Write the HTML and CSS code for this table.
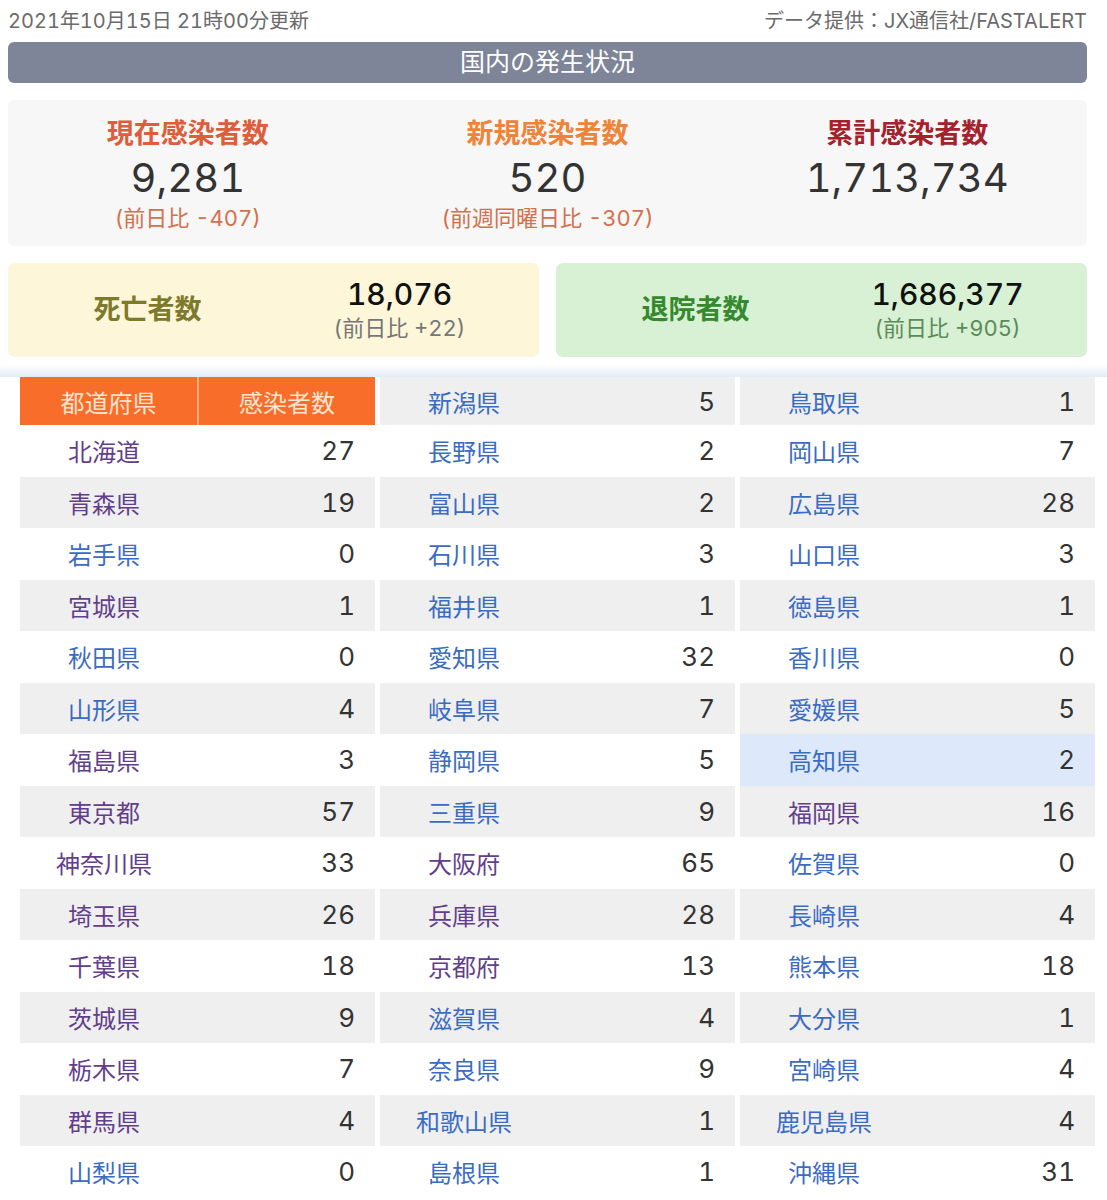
FILE: index.html
```html
<!DOCTYPE html>
<html lang="ja">
<head>
<meta charset="utf-8">
<title>国内の発生状況</title>
<link rel="stylesheet" href="styles.css">
</head>
<body>
<div class="page">
  <div class="meta">
    <span>2021年10月15日 21時00分更新</span>
    <span>データ提供：JX通信社/FASTALERT</span>
  </div>
  <h2 class="title">国内の発生状況</h2>
  <div class="summary">
    <div class="stat">
      <div class="stat-label current">現在感染者数</div>
      <div class="stat-num">9,281</div>
      <div class="stat-sub">(前日比 -407)</div>
    </div>
    <div class="stat">
      <div class="stat-label new">新規感染者数</div>
      <div class="stat-num">520</div>
      <div class="stat-sub">(前週同曜日比 -307)</div>
    </div>
    <div class="stat">
      <div class="stat-label total">累計感染者数</div>
      <div class="stat-num">1,713,734</div>
    </div>
  </div>
  <div class="boxes">
    <div class="box death">
      <div class="box-label">死亡者数</div>
      <div class="box-value">
        <div class="box-num">18,076</div>
        <div class="box-sub">(前日比 +22)</div>
      </div>
    </div>
    <div class="box recovered">
      <div class="box-label">退院者数</div>
      <div class="box-value">
        <div class="box-num">1,686,377</div>
        <div class="box-sub">(前日比 +905)</div>
      </div>
    </div>
  </div>
</div>
<div class="band"></div>
<div class="table">
  <div class="group">
    <div class="head"><div class="head-cell">都道府県</div><div class="head-cell split">感染者数</div></div>
    <div class="row"><span class="pref visited">北海道</span><span class="count">27</span></div>
    <div class="row alt"><span class="pref visited">青森県</span><span class="count">19</span></div>
    <div class="row"><span class="pref">岩手県</span><span class="count">0</span></div>
    <div class="row alt"><span class="pref visited">宮城県</span><span class="count">1</span></div>
    <div class="row"><span class="pref">秋田県</span><span class="count">0</span></div>
    <div class="row alt"><span class="pref">山形県</span><span class="count">4</span></div>
    <div class="row"><span class="pref visited">福島県</span><span class="count">3</span></div>
    <div class="row alt"><span class="pref visited">東京都</span><span class="count">57</span></div>
    <div class="row"><span class="pref visited">神奈川県</span><span class="count">33</span></div>
    <div class="row alt"><span class="pref visited">埼玉県</span><span class="count">26</span></div>
    <div class="row"><span class="pref visited">千葉県</span><span class="count">18</span></div>
    <div class="row alt"><span class="pref visited">茨城県</span><span class="count">9</span></div>
    <div class="row"><span class="pref visited">栃木県</span><span class="count">7</span></div>
    <div class="row alt"><span class="pref visited">群馬県</span><span class="count">4</span></div>
    <div class="row"><span class="pref">山梨県</span><span class="count">0</span></div>
  </div>
  <div class="group">
    <div class="row alt first"><span class="pref">新潟県</span><span class="count">5</span></div>
    <div class="row"><span class="pref">長野県</span><span class="count">2</span></div>
    <div class="row alt"><span class="pref">富山県</span><span class="count">2</span></div>
    <div class="row"><span class="pref">石川県</span><span class="count">3</span></div>
    <div class="row alt"><span class="pref">福井県</span><span class="count">1</span></div>
    <div class="row"><span class="pref">愛知県</span><span class="count">32</span></div>
    <div class="row alt"><span class="pref">岐阜県</span><span class="count">7</span></div>
    <div class="row"><span class="pref">静岡県</span><span class="count">5</span></div>
    <div class="row alt"><span class="pref">三重県</span><span class="count">9</span></div>
    <div class="row"><span class="pref visited">大阪府</span><span class="count">65</span></div>
    <div class="row alt"><span class="pref visited">兵庫県</span><span class="count">28</span></div>
    <div class="row"><span class="pref visited">京都府</span><span class="count">13</span></div>
    <div class="row alt"><span class="pref">滋賀県</span><span class="count">4</span></div>
    <div class="row"><span class="pref">奈良県</span><span class="count">9</span></div>
    <div class="row alt"><span class="pref">和歌山県</span><span class="count">1</span></div>
    <div class="row"><span class="pref">島根県</span><span class="count">1</span></div>
  </div>
  <div class="group">
    <div class="row alt first"><span class="pref">鳥取県</span><span class="count">1</span></div>
    <div class="row"><span class="pref">岡山県</span><span class="count">7</span></div>
    <div class="row alt"><span class="pref">広島県</span><span class="count">28</span></div>
    <div class="row"><span class="pref">山口県</span><span class="count">3</span></div>
    <div class="row alt"><span class="pref">徳島県</span><span class="count">1</span></div>
    <div class="row"><span class="pref">香川県</span><span class="count">0</span></div>
    <div class="row alt"><span class="pref">愛媛県</span><span class="count">5</span></div>
    <div class="row hover"><span class="pref">高知県</span><span class="count">2</span></div>
    <div class="row alt"><span class="pref visited">福岡県</span><span class="count">16</span></div>
    <div class="row"><span class="pref">佐賀県</span><span class="count">0</span></div>
    <div class="row alt"><span class="pref">長崎県</span><span class="count">4</span></div>
    <div class="row"><span class="pref">熊本県</span><span class="count">18</span></div>
    <div class="row alt"><span class="pref">大分県</span><span class="count">1</span></div>
    <div class="row"><span class="pref">宮崎県</span><span class="count">4</span></div>
    <div class="row alt"><span class="pref">鹿児島県</span><span class="count">4</span></div>
    <div class="row"><span class="pref">沖縄県</span><span class="count">31</span></div>
  </div>
</div>
</body>
</html>
```

FILE: styles.css
```css
* { box-sizing: border-box; }
html, body { margin: 0; padding: 0; background: #fff; }
body {
  font-family: Inter, "Noto Sans CJK JP", sans-serif;
  font-variant-numeric: tabular-nums;
  color: #333;
}
.page {
  margin: 0 20px 0 8px;
}
.meta {
  display: flex;
  justify-content: space-between;
  padding-top: 8px;
  height: 42px;
  font-size: 20px;
  line-height: 26px;
  color: #6b6b6b;
}
.title {
  margin: 0;
  height: 41px;
  line-height: 41px;
  background: #7e8598;
  border-radius: 6px;
  color: #fff;
  font-size: 25px;
  font-weight: 400;
  text-align: center;
}
.summary {
  margin-top: 17px;
  height: 146px;
  padding: 15px 0 13px;
  background: #f7f7f7;
  border-radius: 6px;
  display: grid;
  grid-template-columns: 1fr 1fr 1fr;
  text-align: center;
}
.stat-label {
  font-size: 27px;
  font-weight: 700;
  line-height: 38px;
}
.stat-label.current { color: #dc5e3b; }
.stat-label.new { color: #ee8439; }
.stat-label.total { color: #a3222b; }
.stat-num {
  font-size: 40px;
  line-height: 50px;
  color: #333;
}
.stat-sub {
  font-size: 22px;
  line-height: 30px;
  color: #d3714c;
}
.boxes {
  margin-top: 17px;
  display: grid;
  grid-template-columns: 1fr 1fr;
  gap: 17px;
}
.box {
  height: 94px;
  border-radius: 7px;
  padding: 0 13.5px;
  display: grid;
  grid-template-columns: 1fr 1fr;
  align-items: center;
  text-align: center;
}
.box.death { background: #fdf6d9; }
.box.recovered { background: #d8f0d3; }
.box-label {
  font-size: 27px;
  font-weight: 700;
  line-height: 36px;
}
.death .box-label { color: #7d7a2c; }
.recovered .box-label { color: #35892f; }
.box-num {
  font-size: 30px;
  font-weight: 500;
  line-height: 36px;
  color: #111;
}
.box-sub {
  font-size: 22px;
  line-height: 32px;
}
.death .box-sub { color: #777; }
.recovered .box-sub { color: #5b8b5b; }
.band {
  margin-top: 8px;
  height: 12px;
  background: linear-gradient(to bottom, #ffffff, #e3ebf6);
}
.table {
  margin: 0 12px 0 20px;
  display: grid;
  grid-template-columns: 1fr 1fr 1fr;
  column-gap: 5px;
}
.group {
  display: grid;
  grid-template-rows: 48px repeat(15, 51.5px);
}
.head {
  display: grid;
  grid-template-columns: 177px 1fr;
  background: #f96d2b;
}
.head-cell {
  display: flex;
  align-items: center;
  justify-content: center;
  font-size: 24px;
  color: #fde4cf;
}
.head-cell.split { border-left: 2px solid #f8b083; }
.row {
  display: grid;
  grid-template-columns: 168px 1fr;
  align-items: center;
  background: #fff;
}
.row.alt { background: #efefef; }
.row.hover { background: #dde8fb; }
.pref {
  text-align: center;
  font-size: 24px;
  color: #3b6cc4;
}
.pref.visited { color: #623e8c; }
.count {
  text-align: right;
  padding-right: 20px;
  font-size: 26px;
  color: #333;
}
```
